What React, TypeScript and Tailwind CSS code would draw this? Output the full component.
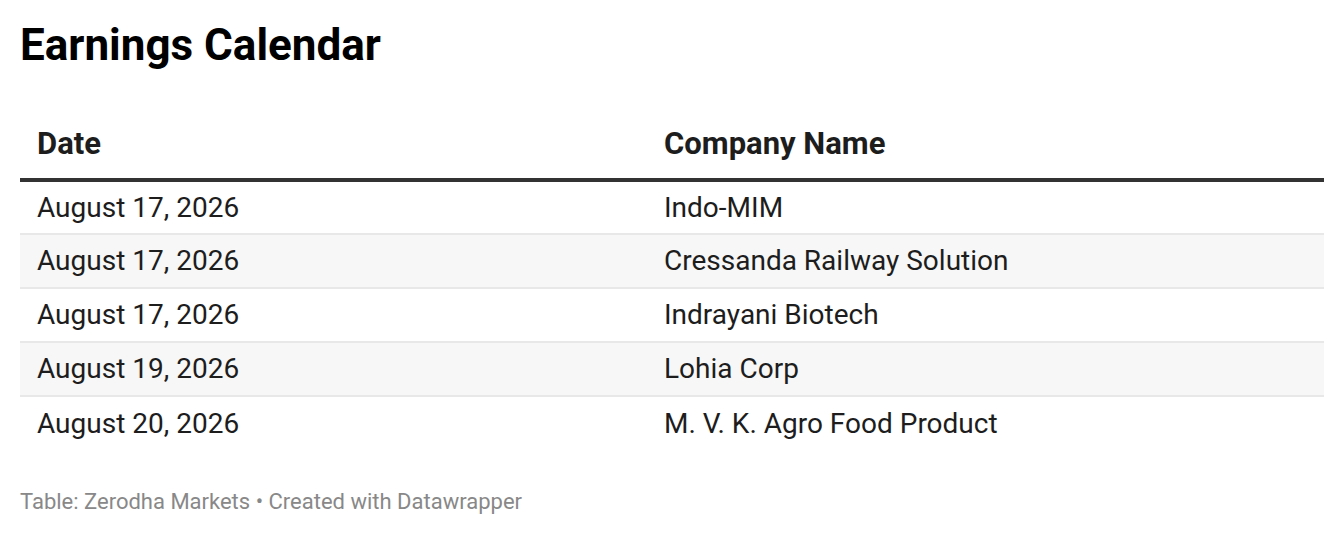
const rows = [
  { date: "August 17, 2026", company: "Indo-MIM" },
  { date: "August 17, 2026", company: "Cressanda Railway Solution" },
  { date: "August 17, 2026", company: "Indrayani Biotech" },
  { date: "August 19, 2026", company: "Lohia Corp" },
  { date: "August 20, 2026", company: "M. V. K. Agro Food Product" },
];

export default function App() {
  return (
    <div className="h-[536px] w-[1344px] bg-white px-5 font-['Roboto',sans-serif] text-[#1d1d1d]">
      <h1 className="pt-[18px] text-[44px] font-bold leading-[54px] text-black">Earnings Calendar</h1>

      <table className="mt-[44px] w-full border-collapse">
        <thead>
          <tr className="border-b-4 border-[#333333]">
            <th className="h-[64px] w-[627px] pb-[6px] pl-[17px] text-left align-middle text-[31px] font-bold">Date</th>
            <th className="pb-[6px] pl-[17px] text-left align-middle text-[31px] font-bold">Company Name</th>
          </tr>
        </thead>
        <tbody>
          {rows.map((row, i) => (
            <tr
              key={i}
              className={`${i % 2 === 1 ? "bg-[#f7f7f7]" : "bg-white"} ${i < rows.length - 1 ? "border-b-2 border-[#e8e8e8]" : ""}`}
            >
              <td className="h-[54px] pl-[17px] align-middle text-[28px]">{row.date}</td>
              <td className="pl-[17px] align-middle text-[28px]">{row.company}</td>
            </tr>
          ))}
        </tbody>
      </table>

      <p className="mt-[38px] text-[22px] leading-[28px] text-[#888888]">
        Table: Zerodha Markets • Created with Datawrapper
      </p>
    </div>
  );
}
